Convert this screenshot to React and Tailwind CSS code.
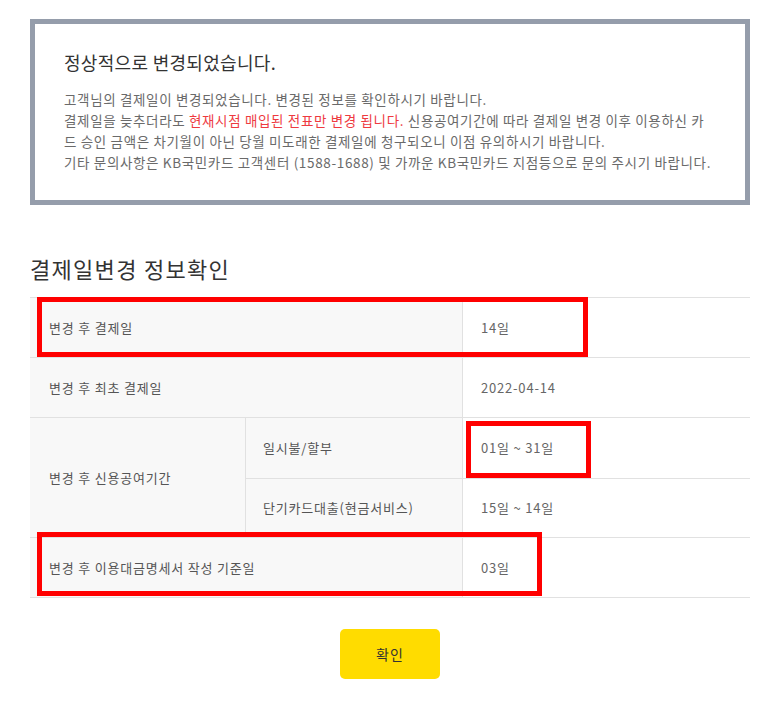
import React from 'react';

const font = { fontFamily: '"Noto Sans CJK KR", "Noto Sans", sans-serif' };

const RedBox = ({ className }) => (
  <div className={`pointer-events-none absolute border-[5px] border-[#ff0000] ${className}`} />
);

const App = () => {
  return (
    <div className="relative min-h-[702px] w-[764px] bg-white pl-[30px] pt-[19px]" style={font}>
      {/* 안내 박스 */}
      <div className="h-[186px] w-[720px] border-[5px] border-[#959dab] px-[29px] pt-[26px]">
        <h2 className="text-[18px] leading-[24px] tracking-[0.3px] text-[#333]">정상적으로 변경되었습니다.</h2>
        <div className="mt-[15px] whitespace-nowrap text-[13.5px] leading-[21px] tracking-[0.65px] text-[#6a6a6a]">
          <p>고객님의 결제일이 변경되었습니다. 변경된 정보를 확인하시기 바랍니다.</p>
          <p>
            결제일을 늦추더라도 <span className="text-[#ee3a3f]">현재시점 매입된 전표만 변경 됩니다.</span> 신용공여기간에 따라 결제일 변경 이후 이용하신 카
          </p>
          <p>드 승인 금액은 차기월이 아닌 당월 미도래한 결제일에 청구되오니 이점 유의하시기 바랍니다.</p>
          <p>기타 문의사항은 KB국민카드 고객센터 (1588-1688) 및 가까운 KB국민카드 지점등으로 문의 주시기 바랍니다.</p>
        </div>
      </div>

      {/* 결제일변경 정보확인 */}
      <h3 className="mt-[48px] mb-[14px] text-[22px] leading-[30px] tracking-[1.3px] text-[#333]">결제일변경 정보확인</h3>

      <div className="w-[720px] border-b border-[#e1e1e1] text-[13px] tracking-[0.8px] text-[#555]">
        <div className="flex h-[60px] border-t border-[#e1e1e1]">
          <div className="flex w-[432px] items-center bg-[#f8f8f8] pl-[19px]">변경 후 결제일</div>
          <div className="flex flex-1 items-center border-l border-[#e1e1e1] pl-[18px] text-[#666]">14일</div>
        </div>
        <div className="flex h-[60px] border-t border-[#e1e1e1]">
          <div className="flex w-[432px] items-center bg-[#f8f8f8] pl-[19px]">변경 후 최초 결제일</div>
          <div className="flex flex-1 items-center border-l border-[#e1e1e1] pl-[18px] text-[#666]">2022-04-14</div>
        </div>
        <div className="flex h-[120px] border-t border-[#e1e1e1]">
          <div className="flex w-[215px] items-center bg-[#f8f8f8] pl-[19px]">변경 후 신용공여기간</div>
          <div className="flex flex-1 flex-col">
            <div className="flex h-[60px]">
              <div className="flex w-[217px] items-center border-l border-[#e1e1e1] bg-[#f8f8f8] pl-[17px]">일시불/할부</div>
              <div className="flex flex-1 items-center border-l border-[#e1e1e1] pl-[18px] text-[#666]">01일 ~ 31일</div>
            </div>
            <div className="flex h-[60px] border-t border-[#e1e1e1]">
              <div className="flex w-[217px] items-center border-l border-[#e1e1e1] bg-[#f8f8f8] pl-[17px]">단기카드대출(현금서비스)</div>
              <div className="flex flex-1 items-center border-l border-[#e1e1e1] pl-[18px] text-[#666]">15일 ~ 14일</div>
            </div>
          </div>
        </div>
        <div className="flex h-[60px] border-t border-[#e1e1e1]">
          <div className="flex w-[432px] items-center bg-[#f8f8f8] pl-[19px]">변경 후 이용대금명세서 작성 기준일</div>
          <div className="flex flex-1 items-center border-l border-[#e1e1e1] pl-[18px] text-[#666]">03일</div>
        </div>
      </div>

      <div className="mt-[31px] flex w-[720px] justify-center">
        <button className="h-[50px] w-[100px] rounded-[5px] bg-[#ffdc00] text-[14px] tracking-[1px] text-[#333]">확인</button>
      </div>

      {/* 빨간 표시 박스 */}
      <RedBox className="left-[37px] top-[297px] h-[60px] w-[551px]" />
      <RedBox className="left-[466px] top-[421px] h-[57px] w-[125px]" />
      <RedBox className="left-[37px] top-[532px] h-[64px] w-[505px]" />
    </div>
  );
};

export default App;
